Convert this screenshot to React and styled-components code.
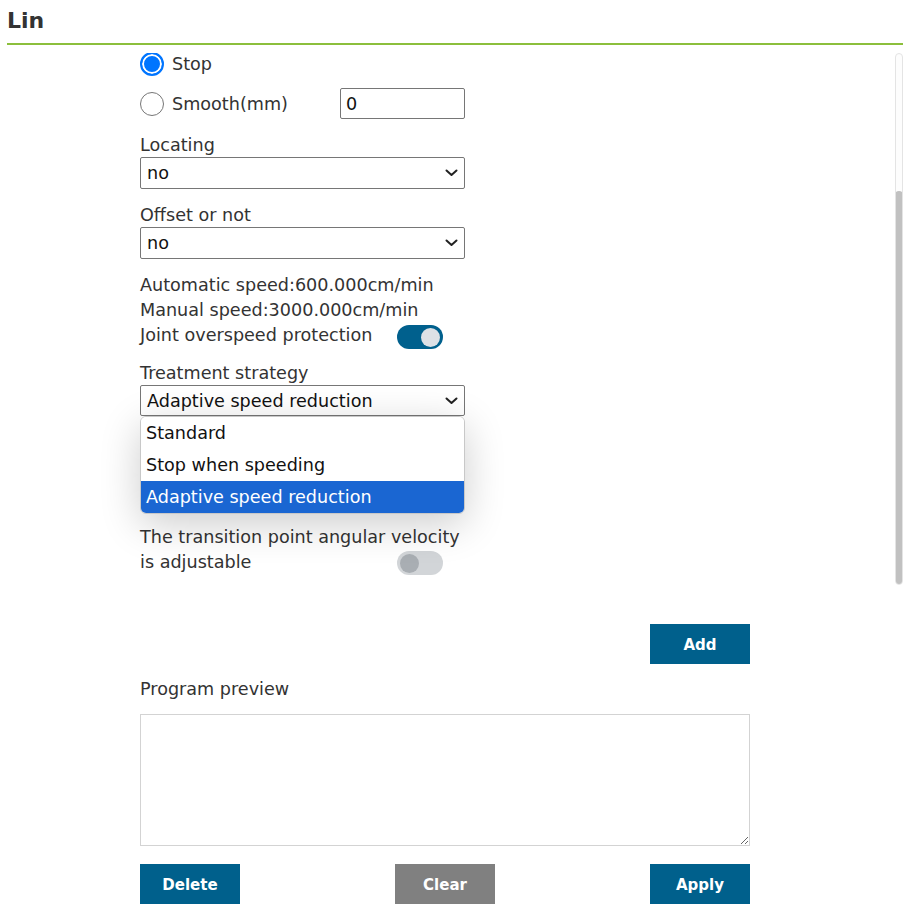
import React from "react";
import styled, { createGlobalStyle } from "styled-components";

const GlobalStyle = createGlobalStyle`
  html, body { margin: 0; padding: 0; background: #fff; }
  body {
    font-family: "DejaVu Sans", Verdana, sans-serif;
    color: #333;
    font-size: 17.6px;
  }
  * { box-sizing: border-box; }
`;

const Page = styled.div`
  padding: 0 18px 0 7px;
  width: 921px;
  height: 912px;
  overflow: hidden;
`;

const Header = styled.div`
  height: 45px;
  border-bottom: 2px solid #8cbf3c;
  display: flex;
  align-items: flex-start;
`;

const Title = styled.h2`
  margin: 0;
  font-size: 22px;
  font-weight: bold;
  line-height: 42px;
  color: #333;
`;

const ScrollArea = styled.div`
  display: flex;
  height: 537px;
  margin-top: 8px;
`;

const Form = styled.div`
  flex: 1;
  overflow: hidden;
  position: relative;
  padding-left: 133px;
`;

const FormInner = styled.div`
  width: 325px;
  margin-top: -1px;
  display: flex;
  flex-direction: column;
`;

const Track = styled.div`
  width: 8px;
  height: 532px;
  border: 1px solid #e4e4e4;
  border-radius: 4px;
  background: #fdfdfd;
  display: flex;
  flex-direction: column;
  justify-content: flex-end;
  overflow: hidden;
`;

const Thumb = styled.div`
  height: 394px;
  margin: 0 -1px -1px;
  background: #c1c1c1;
  border-radius: 4px;
`;

const RadioRow = styled.label`
  display: flex;
  align-items: center;
  height: ${(p) => p.$h || 24}px;
  margin-top: ${(p) => p.$mt || 0}px;
`;

const RadioDot = styled.span`
  width: 24px;
  height: 24px;
  border-radius: 50%;
  flex: none;
  border: ${(p) => (p.$checked ? "2px solid #0075ff" : "1px solid #767676")};
  background: ${(p) => (p.$checked ? "#0075ff" : "#fff")};
  box-shadow: ${(p) => (p.$checked ? "inset 0 0 0 2px #fff" : "none")};
`;

const RadioText = styled.span`
  margin-left: 8px;
  line-height: 24px;
  width: ${(p) => (p.$w ? `${p.$w}px` : "auto")};
`;

const TextInput = styled.div`
  width: 125px;
  height: 31px;
  border: 1px solid #767676;
  border-radius: 2px;
  padding: 0 5px;
  display: flex;
  align-items: center;
  color: #111;
`;

const Label = styled.div`
  line-height: 24px;
  margin-top: ${(p) => p.$mt || 0}px;
`;

const SelectWrap = styled.div`
  position: relative;
  margin-top: ${(p) => p.$mt || 0}px;
`;

const SelectBox = styled.div`
  height: ${(p) => p.$h || 32}px;
  border: 1px solid #767676;
  border-radius: 2px;
  padding: 0 6px;
  display: flex;
  align-items: center;
  justify-content: space-between;
  color: #111;
  background: #fff;
`;

const Chevron = () => (
  <svg width="13" height="8" viewBox="0 0 13 8">
    <path d="M1.5 1.5 L6.5 6 L11.5 1.5" fill="none" stroke="#222" strokeWidth="2" strokeLinecap="round" strokeLinejoin="round" />
  </svg>
);

const Dropdown = styled.div`
  position: absolute;
  left: 0;
  right: 0;
  top: 100%;
  background: #fff;
  border: 1px solid #c8c8c8;
  border-radius: 6px;
  overflow: hidden;
  box-shadow: 0 10px 40px rgba(0, 0, 0, 0.2);
  z-index: 5;
`;

const Option = styled.div`
  height: 32px;
  padding: 0 5px;
  display: flex;
  align-items: center;
  background: ${(p) => (p.$active ? "#1a66d2" : "#fff")};
  color: ${(p) => (p.$active ? "#fff" : "#111")};
`;

const Line = styled.div`
  line-height: 25px;
  margin-top: ${(p) => p.$mt || 0}px;
`;

const ToggleRow = styled.div`
  display: flex;
  height: ${(p) => p.$h || 28}px;
`;

const ToggleLabel = styled.span`
  width: 257px;
  line-height: 25px;
  align-self: flex-start;
`;

const Toggle = styled.span`
  width: 46px;
  height: 24px;
  border-radius: 12px;
  background: ${(p) => (p.$on ? "#00608d" : "#d2d5d8")};
  display: flex;
  align-items: center;
  justify-content: ${(p) => (p.$on ? "flex-end" : "flex-start")};
  padding: 0 3px;
  align-self: flex-end;
  margin-bottom: ${(p) => p.$mb || 0}px;
  &::after {
    content: "";
    width: 19px;
    height: 19px;
    border-radius: 50%;
    background: ${(p) => (p.$on ? "#dde1e6" : "#a9aeb3")};
  }
`;

const Spacer = styled.div`
  height: ${(p) => p.$h}px;
  flex: none;
`;

const Bottom = styled.div`
  padding-left: 133px;
  width: 743px;
  display: flex;
  flex-direction: column;
`;

const ButtonRow = styled.div`
  display: flex;
  justify-content: ${(p) => p.$justify || "space-between"};
  margin-top: ${(p) => p.$mt || 0}px;
`;

const Button = styled.button`
  width: 100px;
  height: 40px;
  border: none;
  border-radius: 0;
  background: ${(p) => (p.$gray ? "#808080" : "#00608c")};
  color: #fff;
  font-family: "DejaVu Sans", Verdana, sans-serif;
  font-weight: bold;
  font-size: 15px;
  padding: 2px 0 0;
`;

const PreviewLabel = styled.div`
  line-height: 24px;
  margin-top: 13px;
`;

const Preview = styled.textarea`
  display: block;
  width: 610px;
  height: 132px;
  margin-top: 13px;
  border: 1px solid #d3d3d3;
  border-radius: 0;
  resize: both;
  font-family: "DejaVu Sans", Verdana, sans-serif;
  font-size: 15px;
  outline: none;
`;

export default function App() {
  return (
    <>
      <GlobalStyle />
      <Page>
        <Header>
          <Title>Lin</Title>
        </Header>
        <ScrollArea>
          <Form>
            <FormInner>
              <RadioRow>
                <RadioDot $checked />
                <RadioText>Stop</RadioText>
              </RadioRow>
              <RadioRow $h={31} $mt={12}>
                <RadioDot />
                <RadioText $w={168}>Smooth(mm)</RadioText>
                <TextInput>0</TextInput>
              </RadioRow>
              <Label $mt={14}>Locating</Label>
              <SelectWrap>
                <SelectBox>
                  <span>no</span>
                  <Chevron />
                </SelectBox>
              </SelectWrap>
              <Label $mt={14}>Offset or not</Label>
              <SelectWrap>
                <SelectBox>
                  <span>no</span>
                  <Chevron />
                </SelectBox>
              </SelectWrap>
              <Line $mt={14}>Automatic speed:600.000cm/min</Line>
              <Line>Manual speed:3000.000cm/min</Line>
              <ToggleRow>
                <ToggleLabel>Joint overspeed protection</ToggleLabel>
                <Toggle $on $mb={2} />
              </ToggleRow>
              <Label $mt={10}>Treatment strategy</Label>
              <SelectWrap>
                <SelectBox $h={31}>
                  <span>Adaptive speed reduction</span>
                  <Chevron />
                </SelectBox>
                <Dropdown>
                  <Option>Standard</Option>
                  <Option>Stop when speeding</Option>
                  <Option $active>Adaptive speed reduction</Option>
                </Dropdown>
              </SelectWrap>
              <Spacer $h={109} />
              <Line>The transition point angular velocity</Line>
              <ToggleRow $h={28}>
                <ToggleLabel>is adjustable</ToggleLabel>
                <Toggle $mb={3} />
              </ToggleRow>
            </FormInner>
          </Form>
          <Track>
            <Thumb />
          </Track>
        </ScrollArea>
        <Bottom>
          <ButtonRow $justify="flex-end" $mt={34}>
            <Button>Add</Button>
          </ButtonRow>
          <PreviewLabel>Program preview</PreviewLabel>
          <Preview />
          <ButtonRow $mt={18}>
            <Button>Delete</Button>
            <Button $gray>Clear</Button>
            <Button>Apply</Button>
          </ButtonRow>
        </Bottom>
      </Page>
    </>
  );
}
